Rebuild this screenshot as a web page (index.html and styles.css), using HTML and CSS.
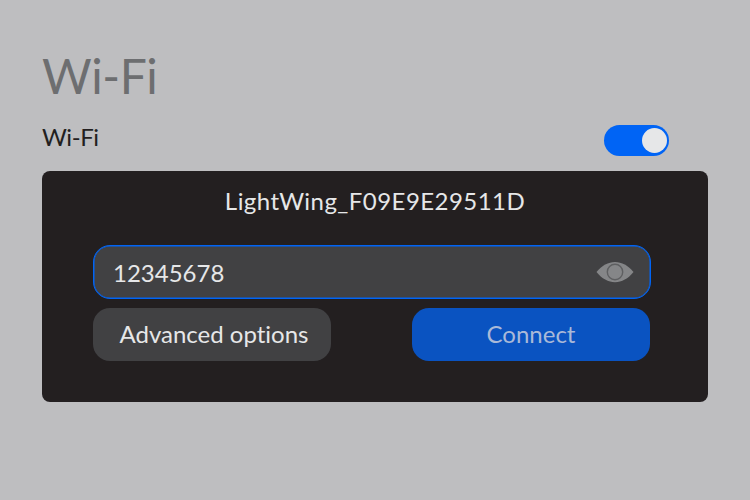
FILE: index.html
```
<!DOCTYPE html>
<html lang="en">
<head>
    <meta charset="UTF-8">
    <meta name="viewport" content="width=device-width, initial-scale=1.0">
    <title>Wi-Fi</title>
    <link rel="stylesheet" href="styles.css">
</head>
<body>
    <main class="settings">
        <h1>Wi-Fi</h1>
        <div class="wifi-row">
            <span class="wifi-label">Wi-Fi</span>
            <div class="toggle"><div class="knob"></div></div>
        </div>
        <form class="dialog">
            <h2>LightWing_F09E9E29511D</h2>
            <div class="password">
                <span>12345678</span>
                <svg class="eye" width="38" height="22" viewBox="0 0 38 22">
                    <path d="M0.5 11C11 -2.5 27 -2.5 37.5 11C27 24.5 11 24.5 0.5 11Z" fill="#858688"/>
                    <circle cx="19" cy="11" r="7.7" fill="#858688" stroke="#5e5f61" stroke-width="1.4"/>
                </svg>
            </div>
            <div class="buttons">
                <button type="button" class="btn advanced">Advanced options</button>
                <button type="button" class="btn connect">Connect</button>
            </div>
        </form>
    </main>
</body>
</html>
```
FILE: styles.css
```
* {
    box-sizing: border-box;
}
body {
    margin: 0;
    height: 500px;
    background: #bebec0;
    font-family: Lato, sans-serif;
    font-variant-ligatures: none;
    overflow: hidden;
}
.settings {
    padding: 47px 42px 0;
}
h1 {
    margin: 0;
    font-size: 48px;
    line-height: 58px;
    font-weight: 400;
    letter-spacing: -0.4px;
    color: #6d6e70;
}
.wifi-row {
    display: flex;
    justify-content: space-between;
    margin-top: 16px;
    padding-right: 39px;
    height: 50px;
}
.wifi-label {
    font-size: 24px;
    line-height: 31px;
    letter-spacing: -0.4px;
    color: #231f20;
}
.toggle {
    display: flex;
    justify-content: flex-end;
    width: 65px;
    height: 31px;
    margin-top: 4px;
    padding: 3px 2px 3px 3px;
    border-radius: 16px;
    background: #0064f5;
}
.knob {
    width: 25px;
    height: 25px;
    border-radius: 50%;
    background: #e6e7e8;
}
.dialog {
    height: 231px;
    padding: 15px 57px 0 51px;
    border-radius: 8px;
    background: #231f20;
}
h2 {
    margin: 0 -10px 29px;
    padding-left: 6px;
    font-size: 24px;
    line-height: 30px;
    font-weight: 400;
    letter-spacing: 0.45px;
    text-align: center;
    color: #e6e7e8;
}
.password {
    display: flex;
    align-items: center;
    justify-content: space-between;
    height: 54px;
    padding: 0 16px 0 19px;
    border: 1px solid #0064f5;
    border-radius: 17px;
    background: #414143;
    box-shadow: inset 0 0 0 0.5px #0064f5;
    font-size: 24px;
    color: #e6e7e8;
}
.buttons {
    display: flex;
    justify-content: space-between;
    margin-top: 9px;
    padding-right: 1px;
}
.btn {
    width: 238px;
    height: 53px;
    padding: 0 0 2px;
    border: none;
    border-radius: 17px;
    font-family: inherit;
    font-size: 24px;
    font-variant-ligatures: none;
}
.advanced {
    padding-left: 4px;
    background: #414143;
    color: #e6e7e8;
}
.connect {
    background: #0a53c1;
    color: #a9b9d8;
}
```
